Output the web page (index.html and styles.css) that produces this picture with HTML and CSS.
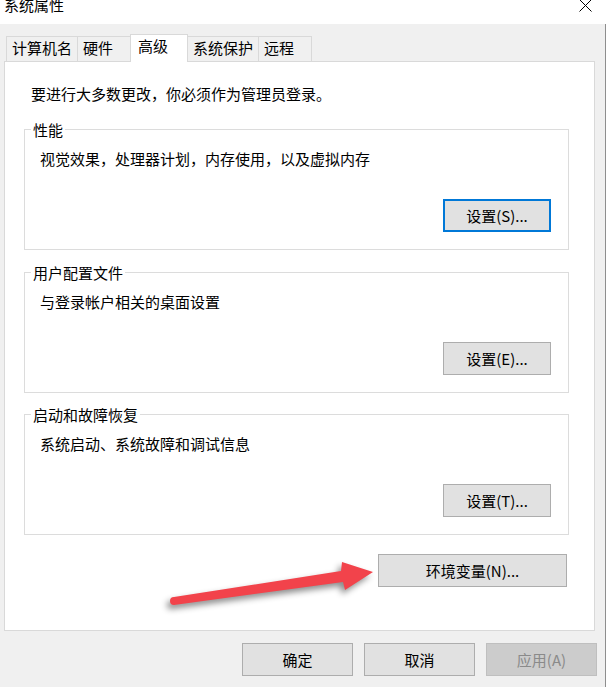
FILE: index.html
```html
<!DOCTYPE html>
<html lang="zh-CN">
<head>
<meta charset="utf-8">
<title>系统属性</title>
<link rel="stylesheet" href="styles.css">
</head>
<body>
<div class="window">
  <div class="titlebar">
    <span class="title">系统属性</span>
    <svg class="close" width="13" height="13" viewBox="0 0 13 13" aria-hidden="true">
      <path d="M0.5 0.5 L12.5 12.5 M12.5 0.5 L0.5 12.5" stroke="#000" stroke-width="1" fill="none"/>
    </svg>
  </div>
  <div class="client">
    <div class="tabs">
      <div class="tab">计算机名</div>
      <div class="tab">硬件</div>
      <div class="tab tab-active">高级</div>
      <div class="tab">系统保护</div>
      <div class="tab">远程</div>
    </div>
    <div class="panel">
      <p class="intro">要进行大多数更改，你必须作为管理员登录。</p>

      <div class="group">
        <div class="group-title">性能</div>
        <p class="group-desc">视觉效果，处理器计划，内存使用，以及虚拟内存</p>
        <div class="group-actions"><button class="btn btn-focus">设置(S)...</button></div>
      </div>

      <div class="group group-2">
        <div class="group-title">用户配置文件</div>
        <p class="group-desc">与登录帐户相关的桌面设置</p>
        <div class="group-actions"><button class="btn">设置(E)...</button></div>
      </div>

      <div class="group group-3">
        <div class="group-title">启动和故障恢复</div>
        <p class="group-desc">系统启动、系统故障和调试信息</p>
        <div class="group-actions"><button class="btn">设置(T)...</button></div>
      </div>

      <div class="env-row"><button class="btn btn-env">环境变量(N)...</button></div>
    </div>
    <div class="footer">
      <button class="btn btn-footer">确定</button>
      <button class="btn btn-footer">取消</button>
      <button class="btn btn-footer btn-disabled">应用(A)</button>
    </div>
  </div>

  <svg class="arrow" width="230" height="70" viewBox="0 0 230 70" aria-hidden="true">
    <path d="M14 47 L181 21 L182 12 L213 22 L185 40 L183 32 L14 55 A4 4 0 0 1 14 47 Z" fill="#f2434b"/>
  </svg>
</div>
</body>
</html>
```

FILE: styles.css
```css
* {
  box-sizing: border-box;
}

html, body {
  margin: 0;
  padding: 0;
}

body {
  width: 609px;
  height: 687px;
  overflow: hidden;
  background: #ffffff;
  font-family: "Noto Sans CJK SC", "Noto Sans", sans-serif;
  font-size: 15px;
  color: #000;
}

.window {
  position: relative;
  width: 606px;
}

.titlebar {
  height: 24px;
  background: #ffffff;
  display: flex;
  justify-content: space-between;
  align-items: flex-start;
  padding: 0 14px 0 4px;
  overflow: hidden;
}

.title {
  display: block;
  line-height: 15px;
  margin-top: -3px;
}

.close {
  display: block;
  margin-top: -1px;
}

.client {
  height: 663px;
  background: #f0f0f0;
  border-right: 1px solid #8e8e8e;
}

.tabs {
  display: flex;
  padding: 12px 0 0 6px;
  height: 37px;
}

.tab {
  height: 25px;
  min-width: 54px;
  padding: 0 5px;
  border: 1px solid #d9d9d9;
  border-bottom: 0;
  background: #f0f0f0;
  line-height: 22px;
  white-space: nowrap;
}

.tab + .tab {
  margin-left: -1px;
}

.tab-active {
  position: relative;
  z-index: 1;
  min-width: 58px;
  height: 28px;
  margin-top: -2px;
  padding: 0 7px;
  background: #ffffff;
}

.panel {
  margin: 0 10px 0 4px;
  background: #ffffff;
  border: 1px solid #d9d9d9;
  padding: 22px 0 43px;
}

.intro {
  margin: 0 0 25px 26px;
  line-height: 20px;
}

.group {
  margin: 0 25px 0 19px;
  border: 1px solid #dcdcdc;
  padding: 0 17px 17px 15px;
}

.group-2 {
  margin-top: 22px;
}

.group-3 {
  margin-top: 21px;
}

.group-title {
  width: max-content;
  margin: -9px 0 0 -9px;
  padding: 0 2px;
  background: #ffffff;
  line-height: 17px;
}

.group-desc {
  margin: 11px 0 0;
  line-height: 20px;
}

.group-actions {
  display: flex;
  justify-content: flex-end;
  margin-top: 30px;
}

.btn {
  display: block;
  height: 33px;
  width: 108px;
  padding: 0;
  margin: 0;
  border: 1px solid #adadad;
  background: #e1e1e1;
  font-family: inherit;
  font-size: 15px;
  color: #000;
  line-height: 31px;
  text-align: center;
}

.btn-focus {
  border: 2px solid #0078d7;
  line-height: 29px;
}

.env-row {
  display: flex;
  justify-content: flex-end;
  margin: 19px 27px 0 0;
}

.btn-env {
  width: 189px;
}

.footer {
  display: flex;
  justify-content: flex-end;
  gap: 11px;
  padding: 12px 8px 0 0;
}

.btn-footer {
  width: 111px;
}

.btn-disabled {
  background: #cccccc;
  border-color: #bfbfbf;
  color: #8a8a8a;
}

.arrow {
  position: absolute;
  left: 160px;
  top: 550px;
  overflow: visible;
  filter: drop-shadow(-3px 4px 3px rgba(0, 0, 0, 0.45));
}
```
